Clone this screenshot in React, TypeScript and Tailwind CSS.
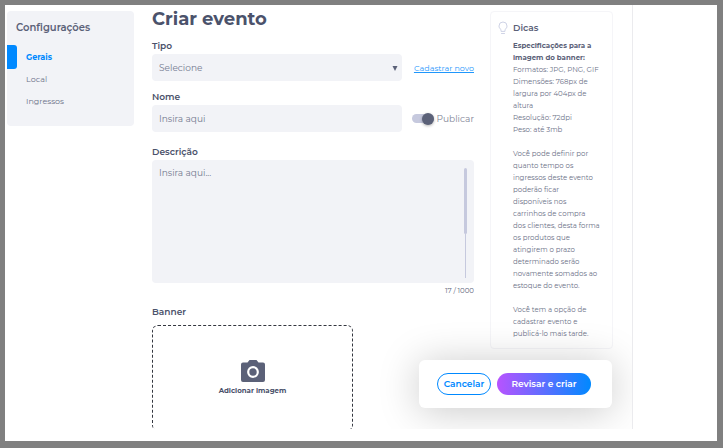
import { useState } from "react";

const sections = ["Gerais", "Local", "Ingressos"];
const label = "block text-[9px] leading-4 font-semibold text-[#4b526b]";
const field =
  "block w-full rounded bg-[#f2f3f7] px-[7px] text-[9px] text-[#747a90] placeholder:text-[#747a90] outline-none";

function Sidebar() {
  return (
    <nav className="h-[115px] w-[127px] shrink-0 rounded bg-[#f2f3f7] pt-[9px]">
      <h2 className="pl-[9px] text-[10px] leading-4 font-semibold text-[#5b6178]">Configurações</h2>
      <ul className="mt-[10px]">
        {sections.map((name, i) => (
          <li key={name} className="flex h-[22px] items-center">
            <span className={i === 0 ? "h-6 w-[10px] shrink-0 rounded-r-[3px] bg-[#0089ff]" : "w-[10px]"} />
            <a
              href="#"
              className={
                i === 0
                  ? "ml-[9px] text-[8px] leading-4 font-bold text-[#0089ff]"
                  : "ml-[9px] text-[8px] leading-4 text-[#6b7187]"
              }
            >
              {name}
            </a>
          </li>
        ))}
      </ul>
    </nav>
  );
}

function EventForm() {
  const [published, setPublished] = useState(true);
  return (
    <form className="min-w-0 flex-1">
      <h1 className="-mt-1 text-[18px] leading-6 font-bold text-[#4b526b]">Criar evento</h1>

      <label htmlFor="tipo" className={label + " mt-[7px]"}>Tipo</label>
      <div className="flex items-center">
        <div className="relative flex-1">
          <select id="tipo" className={field + " h-[27px] appearance-none"}>
            <option>Selecione</option>
          </select>
          <svg viewBox="0 0 6 5" className="pointer-events-none absolute top-3 right-1 h-[5px] w-[6px]" fill="#5b6178">
            <path d="M.5 0h5L3 5z" />
          </svg>
        </div>
        <div className="flex w-[72px] justify-end">
          <a href="#" className="text-[8px] leading-3 whitespace-nowrap text-[#1f97fc] underline">Cadastrar novo</a>
        </div>
      </div>

      <label htmlFor="nome" className={label + " mt-2"}>Nome</label>
      <div className="flex items-center">
        <div className="flex-1">
          <input id="nome" type="text" placeholder="Insira aqui" className={field + " h-[27px]"} />
        </div>
        <label className="flex w-[72px] items-center justify-between pl-[10px] text-[9px] text-[#7f8496]">
          <input
            type="checkbox"
            checked={published}
            onChange={(e) => setPublished(e.target.checked)}
            className="flex h-[9px] w-[22px] shrink-0 appearance-none items-center rounded-full bg-[#c6c9de] before:size-3 before:shrink-0 before:rounded-full before:bg-[#5b6178] before:shadow-[0_1px_3px_rgba(0,0,0,0.3)] checked:justify-end"
          />
          Publicar
        </label>
      </div>

      <label htmlFor="descricao" className={label + " mt-3"}>Descrição</label>
      <div className="relative">
        <textarea
          id="descricao"
          placeholder="Insira aqui..."
          className={field + " h-[123px] resize-none pt-[7px] leading-3"}
        />
        <div className="absolute top-2 right-[7px] flex h-[110px] w-[3px] flex-col items-center">
          <span className="h-[66px] w-[3px] rounded-full bg-[#c6c9de]" />
          <span className="w-px flex-1 bg-[#c6c9de]" />
        </div>
      </div>
      <p className="text-right text-[7px] leading-4 text-[#5b6178]">17 / 1000</p>

      <label htmlFor="banner" className={label + " mt-[5px]"}>Banner</label>
      <button
        id="banner"
        type="button"
        className="mt-[5px] flex h-[106px] w-[201px] flex-col items-center justify-center rounded-md border border-dashed border-[#33363f] text-[7px] leading-3 font-bold text-[#4b526b]"
      >
        <svg viewBox="0 0 24 22" className="mb-[3px] h-[22px] w-6">
          <path
            fill="#5b6178"
            d="M8.500 0h7l2 2.500h4.500a2 2 0 0 1 2 2V20a2 2 0 0 1-2 2H2a2 2 0 0 1-2-2V4.500a2 2 0 0 1 2-2h4.500z"
          />
          <circle cx="12" cy="12" r="4.800" fill="none" stroke="#fff" strokeWidth="2.200" />
        </svg>
        Adicionar imagem
      </button>
    </form>
  );
}

function Tips() {
  return (
    <aside className="flex w-[123px] shrink-0 self-start rounded border border-[#f5f5f8] py-2 pl-[7px] whitespace-nowrap">
      <svg viewBox="0 0 10 14" className="mt-px h-[14px] w-[10px] shrink-0" fill="none" stroke="#cfd3e6" strokeLinecap="round">
        <path d="M3 10V8.500C1.600 7.600 1 6.400 1 5a4 4 0 0 1 8 0c0 1.400-.6 2.600-2 3.500V10zM3.500 12.500h3" />
      </svg>
      <div className="ml-[5px] text-[7px] leading-3 text-[#6b7187]">
        <h2 className="mb-1 text-[9px] leading-4 font-semibold text-[#5b6178]">Dicas</h2>
        <p>
          <strong className="font-bold text-[#5b6178]">
            Especificações para a<br />imagem do banner:
          </strong>
          <br />Formatos: JPG, PNG, GIF
          <br />Dimensões: 768px de
          <br />largura por 404px de
          <br />altura
          <br />Resolução: 72dpi
          <br />Peso: até 3mb
        </p>
        <p className="mt-3">
          Você pode definir por
          <br />quanto tempo os
          <br />ingressos deste evento
          <br />poderão ficar
          <br />disponíveis nos
          <br />carrinhos de compra
          <br />dos clientes, desta forma
          <br />os produtos que
          <br />atingirem o prazo
          <br />determinado serão
          <br />novamente somados ao
          <br />estoque do evento.
        </p>
        <p className="mt-3">
          Você tem a opção de
          <br />cadastrar evento e
          <br />publicá-lo mais tarde.
        </p>
      </div>
    </aside>
  );
}

export default function App() {
  return (
    <div className="h-screen bg-[#808080] pt-[5px] pr-[6px] pb-[7px] pl-[5px] font-['Montserrat','Inter',sans-serif]">
      <div className="h-full bg-white pr-[84px] pb-3">
        <main className="relative h-full overflow-hidden border-r border-[#ebebee]">
          <div className="flex pt-[6px] pr-[19px] pl-[2px]">
            <Sidebar />
            <div className="ml-[18px] flex min-w-0 flex-1 gap-4">
              <EventForm />
              <Tips />
            </div>
          </div>
          <div className="absolute right-5 bottom-[21px] flex h-12 items-center gap-[6px] rounded-md bg-white pr-[21px] pl-[18px] text-[9px] font-semibold shadow-[0_3px_40px_rgba(0,0,0,0.22)]">
            <button type="button" className="h-[22px] w-[54px] rounded-full border border-[#0089ff] text-[#0089ff]">
              Cancelar
            </button>
            <button type="button" className="h-[22px] w-[94px] rounded-full bg-linear-to-r/srgb from-[#b853ff] to-[#0089ff] text-white">
              Revisar e criar
            </button>
          </div>
        </main>
      </div>
    </div>
  );
}
